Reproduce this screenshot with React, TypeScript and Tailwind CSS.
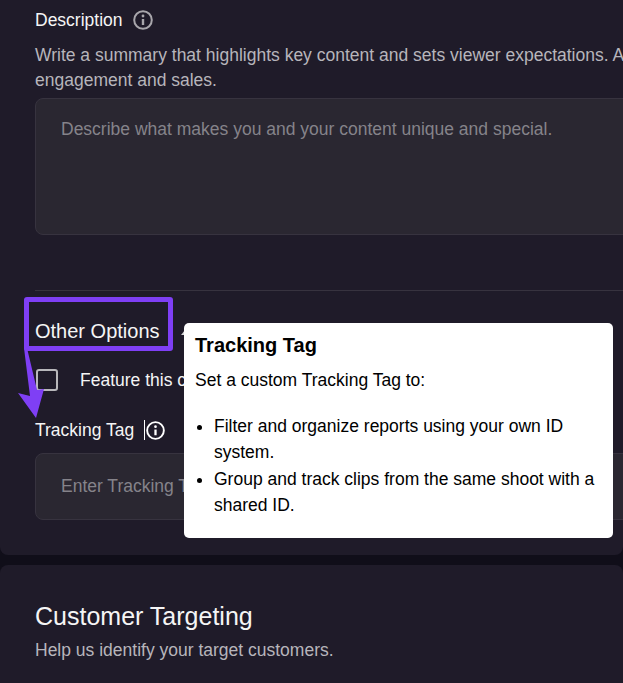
function InfoIcon({ className }: { className: string }) {
  return (
    <svg viewBox="0 0 20 20" className={className} fill="none" stroke="currentColor">
      <circle cx="10" cy="10" r="8.8" strokeWidth="2" />
      <circle cx="10" cy="6" r="1.4" fill="currentColor" stroke="none" />
      <path d="M10 9v6" strokeWidth="2.4" />
    </svg>
  );
}

export default function App() {
  return (
    <div className="relative h-[683px] w-[623px] overflow-hidden bg-[#100e19] font-['Liberation_Sans',Arial,sans-serif] text-[17.5px]">
      <section className="h-[555px] rounded-b-lg bg-[#1f1b29] pl-[35px] pt-2">
        <div className="flex h-6 items-center gap-[10px] leading-6 text-[#f5f5f5]">
          <span>Description</span>
          <InfoIcon className="h-5 w-5 text-[#a8a6ab]" />
        </div>
        <p className="mt-[11px] w-[640px] leading-[25px] text-[#b7b5bb]">
          Write a summary that highlights key content and sets viewer expectations. A
          <br />
          engagement and sales.
        </p>
        <div className="mt-[5px] h-[137px] w-[640px] rounded-lg border border-[#37333f] bg-[#2a2731] px-[25px] pt-[18px] leading-6 text-[#85838a]">
          Describe what makes you and your content unique and special.
        </div>
        <div className="mt-[55px] h-px w-[640px] bg-[#37333f]" />
        <h2 className="mt-[29px] text-[20px] leading-[22px] text-[#f5f5f5]">Other Options</h2>
        <div className="ml-px mt-[27px] flex h-[22px] items-center gap-[22px]">
          <div className="h-[22px] w-[22px] rounded-[3px] border-2 border-[#b8b7bb]" />
          <span className="leading-6 text-[#f5f5f5]">Feature this clip</span>
        </div>
        <div className="mt-[27px] flex h-6 items-center text-[#f5f5f5]">
          <span>Tracking Tag</span>
          <span className="ml-[10px] h-5 w-px bg-white" />
          <InfoIcon className="ml-px h-[19px] w-[19px] text-white" />
        </div>
        <div className="mt-[11px] h-[67px] w-[640px] rounded-lg border border-[#37333f] bg-[#2a2731] px-[25px] pt-[20px] leading-6 text-[#85838a]">
          Enter Tracking Tag
        </div>
      </section>

      <section className="mt-[10px] h-[118px] rounded-t-lg bg-[#1f1b29] pl-[35px] pt-[35px]">
        <h2 className="text-[25px] leading-8 text-[#f5f5f5]">Customer Targeting</h2>
        <p className="mt-[6px] leading-6 text-[#b7b5bb]">Help us identify your target customers.</p>
      </section>

      <div className="absolute left-[24px] top-[297px] h-[54px] w-[149px] rounded-[3px] border-[5px] border-[#7f3ff5]" />
      <svg className="absolute left-0 top-[340px] h-[90px] w-[60px]" viewBox="0 0 60 90">
        <path d="M24 8 L27 8 L37 50 L44 49 L36 78 L18 53 L30 56 Z" fill="#7f3ff5" />
      </svg>

      <div className="absolute left-[181px] top-[330px] h-0 w-0 border-b-[5px] border-l-[4px] border-b-[#d9d9d9] border-l-transparent" />
      <div className="absolute left-[184px] top-[323px] h-[215px] w-[429px] rounded-[5px] bg-white pl-[11px] pr-[16px] pt-[10px] text-black">
        <h3 className="text-[20px] font-bold leading-6">Tracking Tag</h3>
        <p className="mt-[11px] leading-6">Set a custom Tracking Tag to:</p>
        <ul className="mt-[21px] list-disc pl-[19px] leading-[26.4px]">
          <li>Filter and organize reports using your own ID system.</li>
          <li>Group and track clips from the same shoot with a shared ID.</li>
        </ul>
      </div>
    </div>
  );
}
